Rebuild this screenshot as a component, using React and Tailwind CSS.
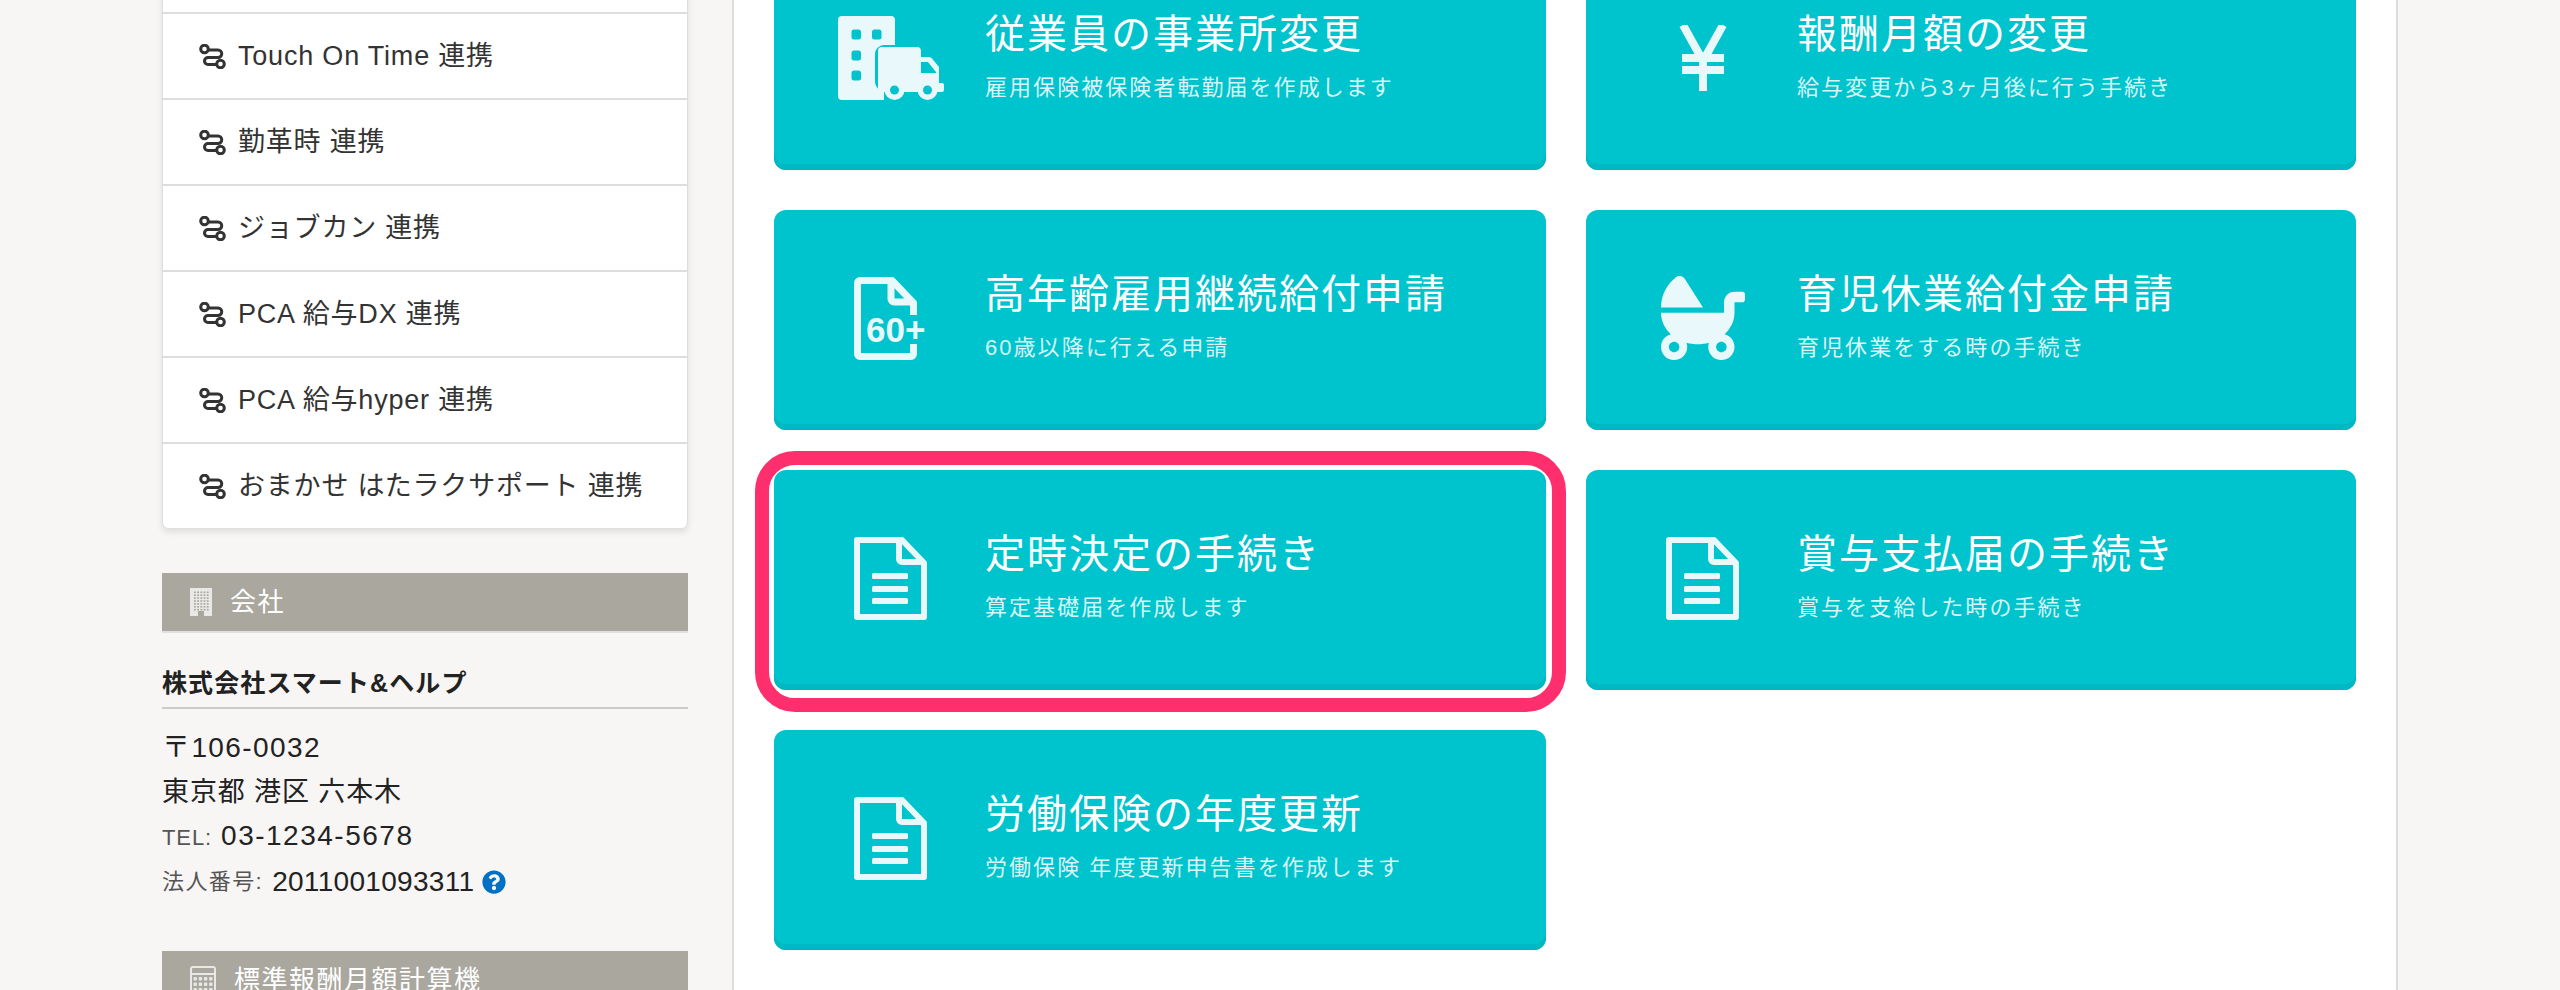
import React from "react";
import { FaBabyCarriage, FaQuestionCircle } from "react-icons/fa";

const ICON = "#e9f8fa";
const TEAL = "#00c4cd";

function DocIcon() {
  return (
    <svg width="73" height="83" viewBox="0 0 73 83" fill="none" stroke={ICON} strokeWidth="6" strokeLinejoin="round">
      <path d="M48 3H3V80H70V26Z" />
      <path d="M45 4V22a3 3 0 0 0 3 3H69" />
      <rect x="18" y="36" width="36" height="6" rx="1.5" fill={ICON} stroke="none" />
      <rect x="18" y="49" width="36" height="6" rx="1.5" fill={ICON} stroke="none" />
      <rect x="18" y="61" width="36" height="6" rx="1.5" fill={ICON} stroke="none" />
    </svg>
  );
}

function Sixty() {
  return (
    <svg width="73" height="83" viewBox="0 0 73 83" fill="none" stroke={ICON} strokeWidth="7" strokeLinejoin="round">
      <path d="M59.500 38V26L38 3.500H6a2.500 2.500 0 0 0-2.500 2.500V77a2.500 2.500 0 0 0 2.500 2.500H57a2.500 2.500 0 0 0 2.500-2.500V67" />
      <path d="M37 4V22a3 3 0 0 0 3 3H59" />
      <text x="12" y="65" fontFamily="'Liberation Sans',sans-serif" fontWeight="700" fontSize="35" fill={ICON} stroke="none">60+</text>
    </svg>
  );
}

function TruckBuilding() {
  return (
    <svg width="106" height="84" viewBox="0 0 106 84">
      <path d="M4 0H53a4 4 0 0 1 4 4V29H46a9 9 0 0 0-9 9V66a9 9 0 0 0 9 9V84H4a4 4 0 0 1-4-4V4a4 4 0 0 1 4-4Z" fill={ICON} />
      <rect x="13.500" y="13.500" width="9.500" height="10" rx="2.500" fill={TEAL} />
      <rect x="34" y="13.500" width="9.500" height="10" rx="2.500" fill={TEAL} />
      <rect x="13.500" y="34.500" width="9.500" height="10" rx="2.500" fill={TEAL} />
      <rect x="13.500" y="54.500" width="9.500" height="10" rx="2.500" fill={TEAL} />
      <path d="M44 31H79a4 4 0 0 1 4 4V41H91a4 4 0 0 1 3 1.500L101 51V67H104a2 2 0 0 1 2 2V74a2 2 0 0 1-2 2H44a4 4 0 0 1-4-4V35a4 4 0 0 1 4-4Z" fill={ICON} />
      <path d="M83 46H90L98 56V57H83Z" fill={TEAL} />
      <circle cx="56.500" cy="74" r="10" fill={ICON} />
      <circle cx="56.500" cy="74" r="4.500" fill={TEAL} />
      <circle cx="89.500" cy="74" r="10" fill={ICON} />
      <circle cx="89.500" cy="74" r="4.500" fill={TEAL} />
    </svg>
  );
}

function Yen() {
  return (
    <svg width="48" height="66" viewBox="0 0 48 66" fill="none" stroke={ICON} strokeWidth="8">
      <path d="M4 0L24 36L44 0" />
      <path d="M24 34V66" strokeLinecap="round" />
      <path d="M3 33H45M3 45H45" />
    </svg>
  );
}

function LinkIcon() {
  return (
    <svg width="27" height="25" viewBox="0 0 27 25" fill="none" stroke="#333" strokeWidth="3" className="shrink-0">
      <circle cx="5.500" cy="5" r="3.800" />
      <circle cx="21.500" cy="20" r="3.800" />
      <path d="M9.500 6H19a3.700 3.700 0 0 1 0 7.500H9a3.500 3.500 0 0 0 0 7H17.500" />
    </svg>
  );
}

function BuildingSmall() {
  const dots = [];
  for (let r = 0; r < 7; r++) for (let c = 0; c < 5; c++) dots.push(<rect key={r + "-" + c} x={4 + c * 3.2} y={3.500 + r * 2.900} width="1.800" height="1.600" fill="#aaa79f" />);
  return (
    <svg width="22" height="28" viewBox="0 0 22 28" className="shrink-0">
      <rect width="22" height="28" fill="#e8e8e6" />
      {dots}
      <rect x="8" y="23" width="6" height="5" fill="#aaa79f" />
    </svg>
  );
}

function CalcSmall() {
  const dots = [];
  for (let r = 0; r < 3; r++) for (let c = 0; c < 4; c++) dots.push(<rect key={r + "-" + c} x={3.500 + c * 5.200} y={11 + r * 5.500} width="3.400" height="3.400" rx="1" fill="#e8e8e6" />);
  return (
    <svg width="26" height="28" viewBox="0 0 26 28" fill="none" className="shrink-0">
      <rect x="1" y="1" width="24" height="26" rx="2" stroke="#e8e8e6" strokeWidth="2" />
      <path d="M1 8H25" stroke="#e8e8e6" strokeWidth="2" />
      {dots}
    </svg>
  );
}

function Card({ icon, title, sub, ring }) {
  return (
    <div className="relative">
      <div className="h-[220px] rounded-[12px] bg-[#00c4cd] shadow-[inset_0_-6px_0_#00b8c1] flex items-center pb-[12px] text-white">
        <div className="w-[211px] shrink-0 pl-[22px] mt-[8px] flex justify-center">{icon}</div>
        <div>
          <div className="text-[40px] leading-[60px] tracking-[2px]">{title}</div>
          <div className="text-[22px] leading-[32px] tracking-[2.05px] mt-[8px] text-[#d9f5f7]">{sub}</div>
        </div>
      </div>
      {ring && <div className="absolute -left-[19px] -right-[20px] -top-[19px] -bottom-[22px] border-[14px] border-[#ff2f6e] rounded-[40px]" />}
    </div>
  );
}

const rows = ["", "Touch On Time 連携", "勤革時 連携", "ジョブカン 連携", "PCA 給与DX 連携", "PCA 給与hyper 連携", "おまかせ はたラクサポート 連携"];

function SideHead({ icon, children }) {
  return (
    <div className="h-[60px] bg-[#aaa79f] border-b-2 border-[#e0dfdc] flex items-center pl-[28px] gap-[18px] text-white text-[26px] tracking-[1.5px]">
      {icon}
      <span>{children}</span>
    </div>
  );
}

export default function App() {
  return (
    <div className="h-[990px] overflow-hidden bg-[#f7f6f4] flex pl-[162px] font-['Liberation_Sans','Noto_Sans_CJK_JP',sans-serif] text-[#222]">
      <aside className="w-[526px] shrink-0 -mt-[72px]">
        <div className="bg-white border-x border-[#ddd] rounded-b-[6px] shadow-[0_4px_6px_rgba(0,0,0,0.1)]">
          {rows.map((r, i) => (
            <div key={i} className={"flex items-center pl-[36px] gap-[12px] text-[27px] tracking-[0.8px] text-[#333] " + (i < rows.length - 1 ? "h-[86px] border-b-2 border-[#ddd]" : "h-[84px]")}>
              {r && <LinkIcon />}
              {r && <span>{r}</span>}
            </div>
          ))}
        </div>
        <div className="mt-[45px]">
          <SideHead icon={<BuildingSmall />}>会社</SideHead>
        </div>
        <div className="mt-[30px] h-[46px] border-b-2 border-[#cccbc8] font-bold text-[25px] tracking-[1.1px] leading-[40px]">株式会社スマート&ヘルプ</div>
        <div className="mt-[17px] text-[27px] leading-[44px] tracking-[0.9px]">
          <div className="text-[28px] tracking-[1.4px]">〒106-0032</div>
          <div>東京都 港区 六本木</div>
          <div><span className="text-[22px] text-[#555]">TEL: </span><span className="text-[28px] tracking-[1.5px] ml-[2px]">03-1234-5678</span></div>
          <div className="flex items-center">
            <span className="text-[22px] text-[#555] tracking-[1.4px]">法人番号: </span>
            <span className="text-[28px] ml-[9px] tracking-[0.3px]">2011001093311</span>
            <FaQuestionCircle className="ml-[8px] text-[24px] text-[#0070c4]" />
          </div>
        </div>
        <div className="mt-[47px]">
          <SideHead icon={<CalcSmall />}>標準報酬月額計算機</SideHead>
        </div>
      </aside>
      <main className="ml-[44px] w-[1666px] shrink-0 bg-white border-x-2 border-[#ddd] px-[40px] -mt-[50px]">
        <div className="grid grid-cols-[772px_770px] gap-[40px]">
          <Card icon={<TruckBuilding />} title="従業員の事業所変更" sub="雇用保険被保険者転勤届を作成します" />
          <Card icon={<Yen />} title="報酬月額の変更" sub="給与変更から3ヶ月後に行う手続き" />
          <Card icon={<Sixty />} title="高年齢雇用継続給付申請" sub="60歳以降に行える申請" />
          <Card icon={<FaBabyCarriage className="text-[84px] text-[#e9f8fa]" />} title="育児休業給付金申請" sub="育児休業をする時の手続き" />
          <Card ring icon={<DocIcon />} title="定時決定の手続き" sub="算定基礎届を作成します" />
          <Card icon={<DocIcon />} title="賞与支払届の手続き" sub="賞与を支給した時の手続き" />
          <Card icon={<DocIcon />} title="労働保険の年度更新" sub="労働保険 年度更新申告書を作成します" />
        </div>
      </main>
    </div>
  );
}
